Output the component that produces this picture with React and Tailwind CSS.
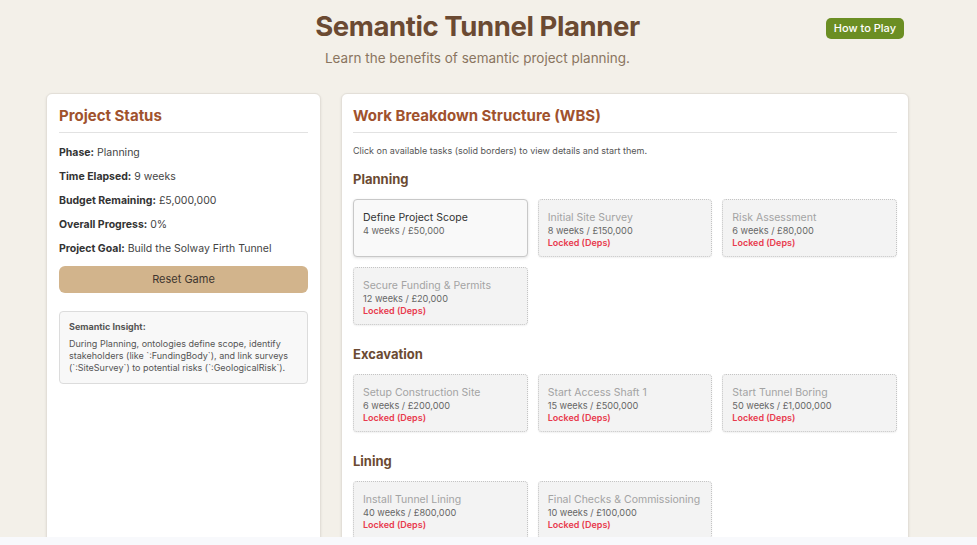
import React from "react";

const sections = [
    {
        name: "Planning",
        tasks: [
            { title: "Define Project Scope", weeks: 4, cost: "£50,000", available: true },
            { title: "Initial Site Survey", weeks: 8, cost: "£150,000" },
            { title: "Risk Assessment", weeks: 6, cost: "£80,000" },
            { title: "Secure Funding & Permits", weeks: 12, cost: "£20,000" },
        ],
    },
    {
        name: "Excavation",
        tasks: [
            { title: "Setup Construction Site", weeks: 6, cost: "£200,000" },
            { title: "Start Access Shaft 1", weeks: 15, cost: "£500,000" },
            { title: "Start Tunnel Boring", weeks: 50, cost: "£1,000,000" },
        ],
    },
    {
        name: "Lining",
        tasks: [
            { title: "Install Tunnel Lining", weeks: 40, cost: "£800,000" },
            { title: "Final Checks & Commissioning", weeks: 10, cost: "£100,000" },
        ],
    },
];

const statusRows = [
    ["Phase:", "Planning"],
    ["Time Elapsed:", "9 weeks"],
    ["Budget Remaining:", "£5,000,000"],
    ["Overall Progress:", "0%"],
    ["Project Goal:", "Build the Solway Firth Tunnel"],
];

const TaskCard = ({ task }) => (
    <div
        className={`rounded-[4px] px-[9px] pt-[11px] pb-[8px] ${
            task.available
                ? "border border-solid border-[#c8c8c8] bg-[#f9f9f9] shadow-[0_1px_3px_rgba(0,0,0,0.12)]"
                : "border border-dotted border-[#c4c4c4] bg-[#f3f3f3] shadow-[0_1px_2px_rgba(0,0,0,0.06)]"
        }`}
    >
        <div className={`text-[10.5px] leading-[13px] ${task.available ? "text-[#333]" : "text-[#a3a3a3]"}`}>
            {task.title}
        </div>
        <div className="text-[9.2px] leading-[13px] text-[#666]">
            {task.weeks} weeks / {task.cost}
        </div>
        {!task.available && (
            <div className="text-[9px] font-semibold leading-[11px] text-[#e83a4d]">Locked (Deps)</div>
        )}
    </div>
);

export default function App() {
    return (
        <div className="h-[545px] bg-[#f8f9fc] font-['Inter',sans-serif]">
            <div className="h-[537px] overflow-hidden bg-[#f3f0e9]">
                <div className="ml-[46px] w-[863px]">
                    <header className="grid grid-cols-[1fr_auto_1fr] items-start pt-[9px]">
                        <div />
                        <div className="flex flex-col items-center">
                            <h1 className="text-[27.5px] font-bold leading-[34px] tracking-[-0.4px] text-[#6b4a32]">
                                Semantic Tunnel Planner
                            </h1>
                            <p className="mt-[6px] text-[13.5px] leading-[18px] text-[#8a7560]">
                                Learn the benefits of semantic project planning.
                            </p>
                        </div>
                        <div className="flex justify-end pt-[9px] pr-[5px]">
                            <button className="h-[21px] rounded-[5px] bg-[#6b8e23] px-[8px] text-[11px] font-medium text-white">
                                How to Play
                            </button>
                        </div>
                    </header>

                    <div className="mt-[26px] flex items-start gap-[20px]">
                        <aside className="h-[460px] w-[275px] shrink-0 rounded-[6px] border border-[#e3dfd8] bg-white px-[12px] pt-[12px] shadow-[0_1px_3px_rgba(0,0,0,0.08)]">
                            <h2 className="border-b border-[#e2e2e2] pb-[6px] text-[15px] font-bold leading-[20px] text-[#a0522d]">
                                Project Status
                            </h2>
                            <div className="mt-[12px]">
                                {statusRows.map(([label, value]) => (
                                    <p key={label} className="mb-[8px] text-[10.5px] leading-[16px] text-[#444]">
                                        <span className="font-bold text-[#333]">{label}</span> {value}
                                    </p>
                                ))}
                            </div>
                            <button className="mt-[1px] h-[27px] w-full rounded-[6px] bg-[#d2b48c] text-[11px] text-[#3f362f]">
                                Reset Game
                            </button>
                            <div className="mt-[18px] rounded-[4px] border border-[#dcdcdc] bg-[#f8f8f8] px-[9px] pt-[9px] pb-[9px]">
                                <div className="mb-[5px] text-[9px] font-bold leading-[12px] text-[#555]">Semantic Insight:</div>
                                <p className="text-[9px] leading-[12px] text-[#555]">
                                    During Planning, ontologies define scope, identify stakeholders (like `:FundingBody`), and
                                    link surveys (`:SiteSurvey`) to potential risks (`:GeologicalRisk`).
                                </p>
                            </div>
                        </aside>

                        <main className="h-[460px] flex-1 rounded-[6px] border border-[#e3dfd8] bg-white px-[11px] pt-[12px] shadow-[0_1px_3px_rgba(0,0,0,0.08)]">
                            <h2 className="border-b border-[#e2e2e2] pb-[6px] text-[15px] font-bold leading-[20px] text-[#a0522d]">
                                Work Breakdown Structure (WBS)
                            </h2>
                            <p className="mt-[12px] text-[9px] leading-[12px] text-[#555]">
                                Click on available tasks (solid borders) to view details and start them.
                            </p>
                            {sections.map((section, i) => (
                                <section key={section.name} className={i === 0 ? "mt-[14px]" : "mt-[21px]"}>
                                    <h3 className="mb-[12px] text-[13px] font-bold leading-[16px] text-[#6b4a32]">
                                        {section.name}
                                    </h3>
                                    <div className="grid grid-cols-3 gap-[10px]">
                                        {section.tasks.map((task) => (
                                            <TaskCard key={task.title} task={task} />
                                        ))}
                                    </div>
                                </section>
                            ))}
                        </main>
                    </div>
                </div>
            </div>
        </div>
    );
}
